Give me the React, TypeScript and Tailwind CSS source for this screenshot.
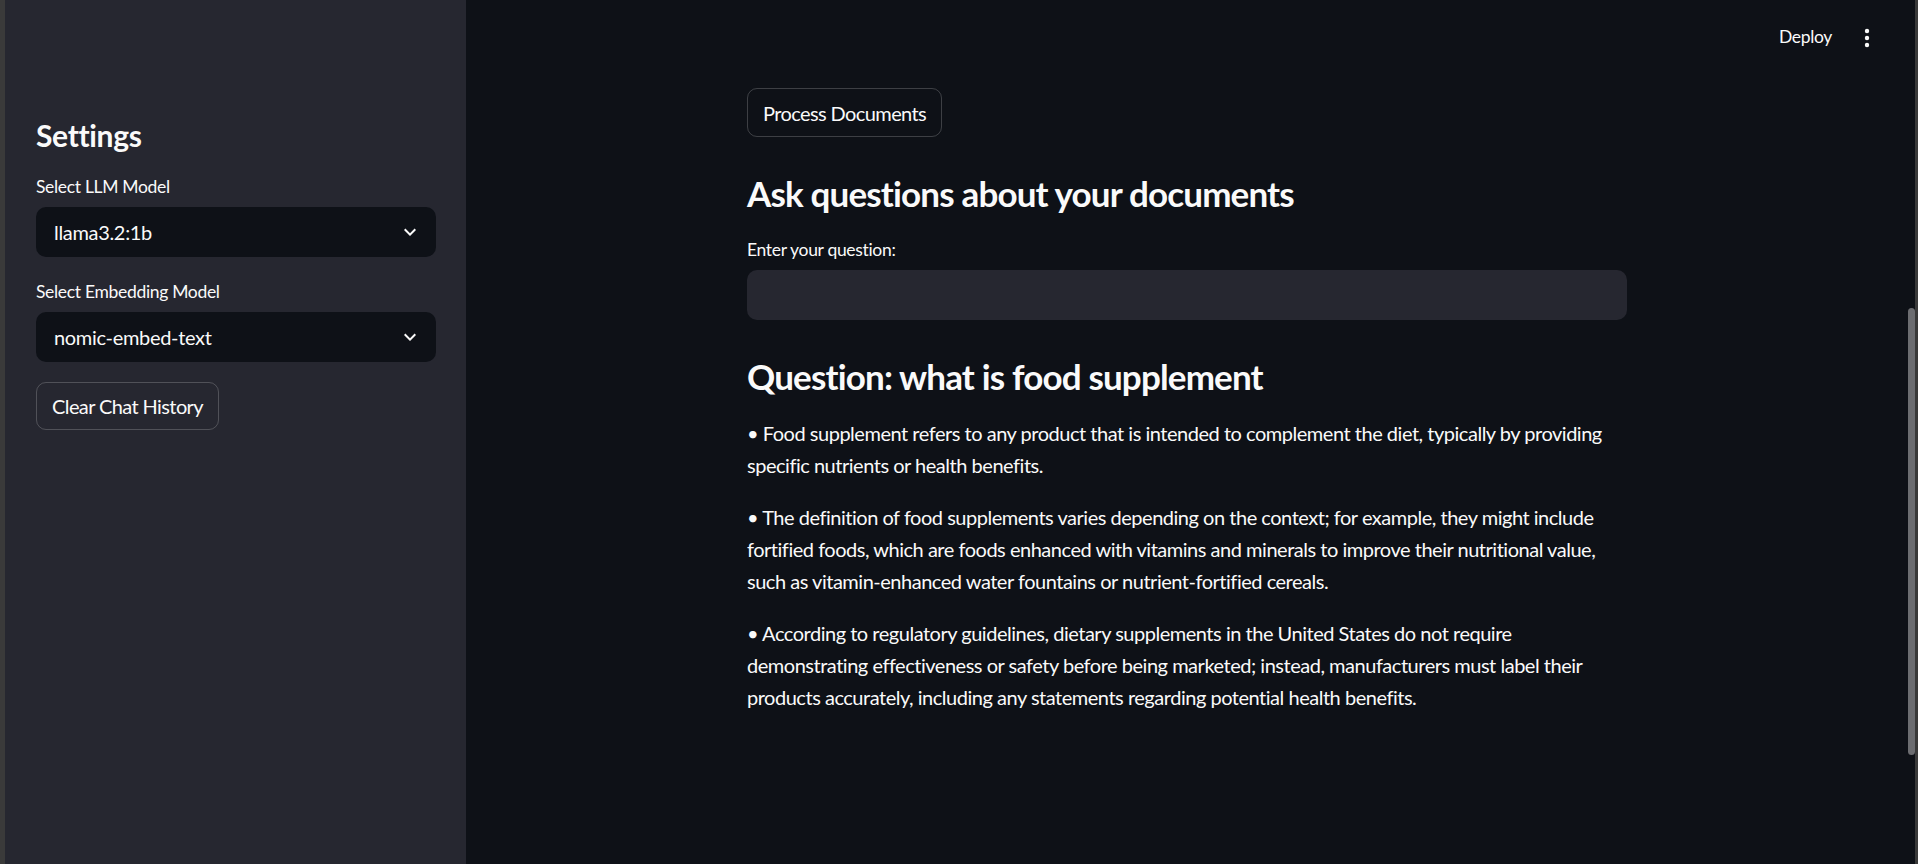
const font = { fontFamily: "Lato, 'Noto Sans', sans-serif" };

function Chevron() {
  return (
    <svg width="24" height="24" viewBox="0 0 24 24" fill="#fafafa">
      <path d="M16.59 8.59L12 13.17 7.41 8.59 6 10l6 6 6-6z" />
    </svg>
  );
}

function SelectBox({ label, value }: { label: string; value: string }) {
  return (
    <div className="flex flex-col">
      <div className="flex h-[30px] items-center text-[17.5px] text-[#fafafa]">{label}</div>
      <div className="mt-[5px] flex h-[50px] items-center justify-between rounded-[10px] bg-[#0e1117] pl-[18px] pr-[14px] text-[20px] text-[#fafafa]">
        <span>{value}</span>
        <Chevron />
      </div>
    </div>
  );
}

const answers = [
  [
    "• Food supplement refers to any product that is intended to complement the diet, typically by providing",
    "specific nutrients or health benefits.",
  ],
  [
    "• The definition of food supplements varies depending on the context; for example, they might include",
    "fortified foods, which are foods enhanced with vitamins and minerals to improve their nutritional value,",
    "such as vitamin-enhanced water fountains or nutrient-fortified cereals.",
  ],
  [
    "• According to regulatory guidelines, dietary supplements in the United States do not require",
    "demonstrating effectiveness or safety before being marketed; instead, manufacturers must label their",
    "products accurately, including any statements regarding potential health benefits.",
  ],
];

export default function App() {
  return (
    <div
      className="flex h-[864px] w-full overflow-hidden bg-[#0e1117] tracking-[-0.02em] text-[#fafafa]"
      style={font}
    >
      <div className="w-[5px] shrink-0 bg-[#3a3a3a]" />

      {/* sidebar */}
      <aside className="flex w-[461px] shrink-0 flex-col bg-[#262730] pl-[31px] pr-[30px] pt-[117px]">
        <h2 className="h-[36px] text-[30px] font-bold leading-[36px]">Settings</h2>
        <div className="mt-[19px] flex flex-col gap-[20px]">
          <SelectBox label="Select LLM Model" value="llama3.2:1b" />
          <SelectBox label="Select Embedding Model" value="nomic-embed-text" />
          <div>
            <button className="h-[48px] rounded-[10px] border border-[#fafafa]/20 px-[15px] text-[20px] tracking-[-0.03em]">
              Clear Chat History
            </button>
          </div>
        </div>
      </aside>

      {/* main */}
      <main className="flex w-[1442px] shrink-0 flex-col">
        <header className="flex h-[75px] shrink-0 items-center justify-end gap-[32px] pr-[38px]">
          <span className="text-[17.5px]">Deploy</span>
          <svg width="6" height="20" viewBox="0 0 6 20" fill="#fafafa">
            <circle cx="3" cy="3" r="2.2" />
            <circle cx="3" cy="10" r="2.2" />
            <circle cx="3" cy="17" r="2.2" />
          </svg>
        </header>

        <div className="mx-auto flex w-[880px] flex-col pt-[13px]">
          <div>
            <button className="h-[49px] rounded-[10px] border border-[#fafafa]/20 px-[15px] text-[20px] tracking-[-0.03em]">
              Process Documents
            </button>
          </div>

          <h3 className="mt-[35px] text-[35px] font-bold leading-[42px] tracking-[-0.024em]">
            Ask questions about your documents
          </h3>

          <div className="mt-[21px] flex h-[30px] items-center text-[17.5px]">Enter your question:</div>
          <div className="mt-[5px] h-[50px] w-full rounded-[10px] bg-[#262730]" />

          <h3 className="mt-[35px] text-[35px] font-bold leading-[42px] tracking-[-0.024em]">
            Question: what is food supplement
          </h3>

          <div className="mt-[20px] flex flex-col gap-[20px]">
            {answers.map((lines, i) => (
              <p key={i} className="whitespace-nowrap text-[20px] leading-[32px] tracking-[-0.024em]">
                {lines.map((l, j) => (
                  <span key={j} className="block">
                    {l}
                  </span>
                ))}
              </p>
            ))}
          </div>
        </div>
      </main>

      {/* scrollbar */}
      <div className="flex w-[7px] shrink-0 flex-col pt-[308px]">
        <div className="h-[447px] w-full rounded-full bg-[#6c6d71]" />
      </div>
      <div className="w-[3px] shrink-0 bg-[#3a3a3a]" />
    </div>
  );
}
